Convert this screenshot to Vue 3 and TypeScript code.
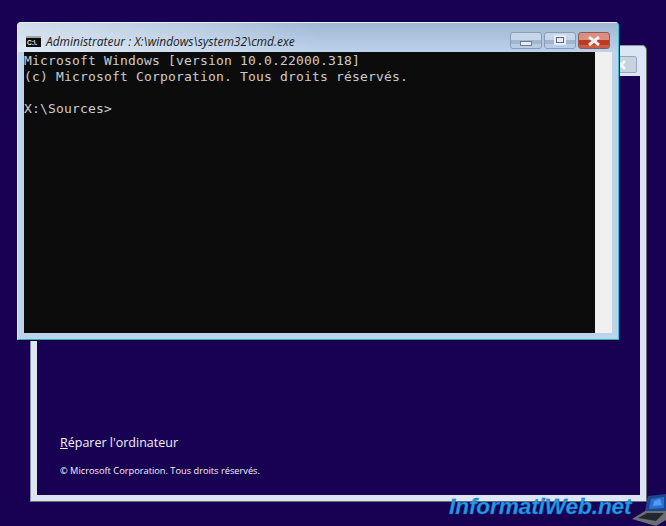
<script setup lang="ts">
const lines: string[] = [
  'Microsoft Windows [version 10.0.22000.318]',
  '(c) Microsoft Corporation. Tous droits réservés.',
  '',
  'X:\\Sources>',
]
</script>

<template>
  <main class="desktop">
    <section class="setup">
      <div class="setup-title">
        <span class="setup-close">
          <svg width="10" height="10" viewBox="0 0 10 10"><path d="M1 1 L9 9 M9 1 L1 9" stroke="#f4f6f9" stroke-width="2.6" /></svg>
        </span>
      </div>
      <div class="setup-body">
        <p class="repair"><u>R</u>éparer l'ordinateur</p>
        <p class="copy">© Microsoft Corporation. Tous droits réservés.</p>
      </div>
    </section>

    <section class="cmd">
      <header class="cmd-title">
        <span class="cmd-icon">C:\.</span>
        <span class="cmd-name">Administrateur : X:\windows\system32\cmd.exe</span>
        <span class="buttons">
          <span class="btn"><i class="min"></i></span>
          <span class="btn"><i class="max"></i></span>
          <span class="btn close">
            <svg width="14" height="10" viewBox="0 0 14 10"><path d="M2 1 L12 9 M12 1 L2 9" stroke="#eef0f2" stroke-width="3" /></svg>
          </span>
        </span>
      </header>
      <div class="cmd-client">
        <pre class="console"><template v-for="line in lines" :key="line">{{ line }}
</template></pre>
        <div class="scrollbar"></div>
      </div>
    </section>

    <div class="brand">
      <span class="brand-text">InformatiWeb.net</span>
      <svg class="laptop" width="34" height="32" viewBox="0 0 34 32">
        <path d="M16 2 L34 0 L34 17 L13 17 Z" fill="#1c4690" />
        <path d="M19 5 L32 3 L32 14 L17 15 Z" fill="#2a6fd0" />
        <path d="M22 7 L28 5 L30 11 L21 12 Z" fill="#4f9cf0" />
        <path d="M0 25 L13 17 L34 17 L34 26 L24 32 Z" fill="#6a6f76" />
        <path d="M6 24 L15 19 L32 19 L24 27 Z" fill="#24272e" />
      </svg>
    </div>
  </main>
</template>

<style>
html, body { margin: 0; background: #180052; }
</style>

<style scoped>
.desktop {
  position: relative;
  width: 666px;
  height: 526px;
  overflow: hidden;
  background: #180052;
}
.setup {
  position: absolute;
  left: 30px;
  top: 45px;
  width: 617px;
  height: 457px;
  box-sizing: border-box;
  display: flex;
  flex-direction: column;
  background: #dbe5f3;
  border: 1px solid #6d6d75;
  border-top-color: #8f95a5;
  border-left-color: #8f95a5;
  border-radius: 5px 5px 0 0;
}
.setup-title {
  height: 30px;
  display: flex;
  justify-content: flex-end;
  align-items: flex-start;
  padding-right: 9px;
}
.setup-close {
  width: 32px;
  height: 17px;
  border: 1px solid #9aa6b8;
  border-radius: 2px;
  margin-top: 10px;
  display: flex;
  align-items: center;
  justify-content: flex-start;
  padding-left: 10px;
  box-sizing: border-box;
  background: #c8d3e2;
}
.setup-body {
  flex: 1;
  margin: 0 6px 6px;
  background: #180052;
  color: #f4f2fa;
  font-family: "Open Sans", "Noto Sans", sans-serif;
  padding-left: 23px;
  display: flex;
  flex-direction: column;
  justify-content: flex-end;
}
.repair {
  margin: 0 0 14px;
  font-size: 12.5px;
  line-height: 17px;
}
.copy {
  margin: 0 0 18px;
  font-size: 9.25px;
  line-height: 12px;
}
.cmd {
  position: absolute;
  left: 17px;
  top: 22px;
  width: 602px;
  height: 318px;
  box-sizing: border-box;
  display: flex;
  flex-direction: column;
  background: #bdd3ea;
  border: 1px solid #e9eef5;
  border-right-color: #2fc4d8;
  border-bottom-color: #2fb0c0;
  border-radius: 4px 4px 0 0;
  box-shadow: 1px 1px 0 #0a0a2a;
}
.cmd-title {
  height: 29px;
  box-sizing: border-box;
  display: flex;
  align-items: flex-start;
  padding: 10px 8px 0 8px;
  font: italic 12px/17px "Open Sans", "Noto Sans", sans-serif;
  letter-spacing: -0.02px;
  color: #1a1a1a;
  background:
    linear-gradient(90deg, rgba(255, 255, 255, 0.5) 0, rgba(255, 255, 255, 0.25) 30%, rgba(255, 255, 255, 0) 50%),
    linear-gradient(180deg, #a0b8d4 0, #bcd2ea 100%);
}
.cmd-icon {
  width: 15px;
  height: 11px;
  margin-top: 3px;
  margin-right: 5px;
  background: #0c0c0c;
  border-top: 2px solid #a4a4a4;
  box-sizing: border-box;
  color: #f2f2f2;
  font: bold 6.5px/9px "Liberation Sans", sans-serif;
  overflow: hidden;
  white-space: nowrap;
  padding-left: 1px;
}
.cmd-name {
  flex: 1;
}
.buttons {
  display: flex;
  gap: 2px;
  margin-top: -1px;
}
.btn {
  width: 32px;
  height: 17px;
  box-sizing: border-box;
  border: 1px solid #8a9db8;
  border-radius: 3px;
  background: linear-gradient(180deg, #c7d7e9 0 45%, #9fb7d3 45% 75%, #b8cde3 75% 100%);
  display: flex;
  align-items: center;
  justify-content: center;
}
.btn.close {
  border-color: #8d5a5c;
  background: linear-gradient(180deg, #dc8f80 0 45%, #bd3a24 45% 80%, #cc5c44 80% 100%);
}
.min {
  width: 12px;
  height: 5px;
  margin-top: 6px;
  background: #e8ebef;
  border: 1px solid #6a7a90;
  box-sizing: border-box;
}
.max {
  width: 12px;
  height: 10px;
  margin-top: -2px;
  box-sizing: border-box;
  background: #e8ebef;
  border: 3px solid #e8ebef;
  outline: 1px solid #5a6a80;
  outline-offset: -3px;
}
.cmd-client {
  flex: 1;
  margin: 0 6px 6px;
  display: flex;
  background: #0c0c0c;
  min-height: 0;
}
.console {
  flex: 1;
  margin: 0;
  padding-top: 1px;
  color: #cccccc;
  font-family: "DejaVu Sans Mono", monospace;
  font-size: 13px;
  letter-spacing: 0.174px;
  line-height: 16px;
}
.scrollbar {
  width: 17px;
  background: #f0f0f0;
}
.brand {
  position: absolute;
  left: 449px;
  top: 494px;
  display: flex;
  align-items: flex-start;
}
.brand-text {
  font: italic bold 22.6px/26px "Liberation Sans", Arial, sans-serif;
  color: #1f9ee6;
  -webkit-text-stroke: 0.4px #0d5fae;
  letter-spacing: -0.1px;
}
.laptop {
  margin-left: 0;
}
</style>
